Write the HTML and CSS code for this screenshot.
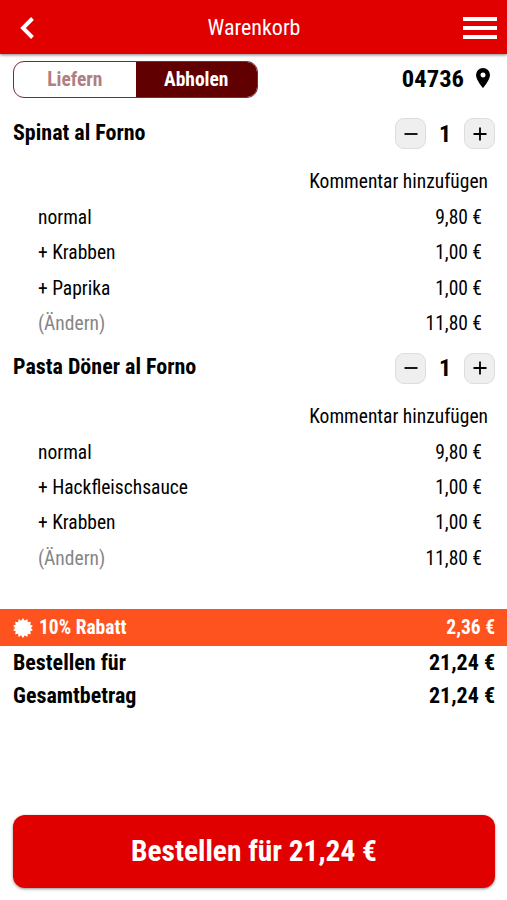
FILE: index.html
```html
<!DOCTYPE html>
<html lang="de">
<head>
  <meta charset="UTF-8" />
  <meta name="viewport" content="width=device-width, initial-scale=1.0"/>
  <title>Warenkorb</title>
  <link rel="stylesheet" href="styles.css">
</head>
<body>
  <header class="topbar">
    <svg class="back" viewBox="0 0 14 22"><path d="M12.5 1.5 3 11l9.5 9.5" /></svg>
    <h1 class="title">Warenkorb</h1>
    <div class="burger"><i></i><i></i><i></i></div>
  </header>

  <div class="options">
    <div class="switch">
      <div class="switch-item">Liefern</div>
      <div class="switch-item active">Abholen</div>
    </div>
    <div class="zip">
      <span>04736</span>
      <svg class="pin" viewBox="0 0 14 20"><path fill-rule="evenodd" d="M7 0a7 7 0 0 0-7 7c0 5 7 13 7 13s7-8 7-13a7 7 0 0 0-7-7zm0 4.5a2.5 2.5 0 1 1 0 5 2.5 2.5 0 0 1 0-5z" /></svg>
    </div>
  </div>

  <main class="cart">
    <section class="product">
      <div class="product-head">
        <h2 class="name">Spinat al Forno</h2>
        <div class="amount">
          <button class="step"><svg viewBox="0 0 14 14"><path d="M.5 7h13" /></svg></button>
          <span class="count">1</span>
          <button class="step"><svg viewBox="0 0 14 14"><path d="M.5 7h13M7 .5v13" /></svg></button>
        </div>
      </div>
      <div class="comment">Kommentar hinzufügen</div>
      <div class="row"><span>normal</span><span>9,80 €</span></div>
      <div class="row"><span>+ Krabben</span><span>1,00 €</span></div>
      <div class="row"><span>+ Paprika</span><span>1,00 €</span></div>
      <div class="row"><span class="change">(Ändern)</span><span>11,80 €</span></div>
    </section>

    <section class="product">
      <div class="product-head">
        <h2 class="name">Pasta Döner al Forno</h2>
        <div class="amount">
          <button class="step"><svg viewBox="0 0 14 14"><path d="M.5 7h13" /></svg></button>
          <span class="count">1</span>
          <button class="step"><svg viewBox="0 0 14 14"><path d="M.5 7h13M7 .5v13" /></svg></button>
        </div>
      </div>
      <div class="comment">Kommentar hinzufügen</div>
      <div class="row"><span>normal</span><span>9,80 €</span></div>
      <div class="row"><span>+ Hackfleischsauce</span><span>1,00 €</span></div>
      <div class="row"><span>+ Krabben</span><span>1,00 €</span></div>
      <div class="row"><span class="change">(Ändern)</span><span>11,80 €</span></div>
    </section>
  </main>

  <div class="discount">
    <svg class="badge" viewBox="-10 -10 20 20"><path d="M0-10 1.9-7.3 4.3-9 5-5.8 7.8-6.2 7.3-3.3 9.8-2.2 8 0 9.8 2.2 7.3 3.3 7.8 6.2 5 5.8 4.3 9 1.9 7.3 0 10-1.9 7.3-4.3 9-5 5.8-7.8 6.2-7.3 3.3-9.8 2.2-8 0-9.8-2.2-7.3-3.3-7.8-6.2-5-5.8-4.3-9-1.9-7.3z" /></svg>
    <span>10% Rabatt</span>
    <span class="price">2,36 €</span>
  </div>
  <div class="total"><span>Bestellen für</span><span>21,24 €</span></div>
  <div class="total"><span>Gesamtbetrag</span><span>21,24 €</span></div>

  <button class="order">Bestellen für 21,24 €</button>
</body>
</html>
```
FILE: styles.css
```css
* {
  box-sizing: border-box;
}

body {
  margin: 0;
  height: 900px;
  display: flex;
  flex-direction: column;
  overflow: hidden;
  background: #fff;
  color: #000;
  font-family: "Roboto Condensed", Roboto, sans-serif;
  font-stretch: 75%;
  font-size: 19.5px;
}

h1, h2 {
  margin: 0;
}

button {
  border: 0;
  padding: 0;
  font: inherit;
}

.topbar {
  flex: none;
  height: 54px;
  padding: 0 10px 0 20px;
  display: grid;
  grid-template-columns: 25px 1fr 34px;
  align-items: center;
  background: #e00000;
  color: #fff;
  box-shadow: 0 1px 3px rgba(0, 0, 0, 0.5);
}

.back {
  width: 14px;
  height: 22px;
  margin-top: 2px;
  fill: none;
  stroke: #fff;
  stroke-width: 3.9;
}

.title {
  font-size: 22px;
  font-weight: 400;
  text-align: center;
}

.burger {
  margin-top: 2px;
  display: flex;
  flex-direction: column;
  gap: 5px;
}

.burger i {
  height: 4px;
  background: #fff;
}

.options {
  flex: none;
  height: 50px;
  padding: 7px 17px 0 13px;
  display: flex;
  justify-content: space-between;
  align-items: flex-start;
}

.switch {
  width: 245px;
  height: 37px;
  display: flex;
  border: 1px solid #7c2c2c;
  border-radius: 11px;
  overflow: hidden;
  font-weight: 700;
}

.switch-item {
  flex: 1;
  display: flex;
  align-items: center;
  justify-content: center;
  color: #b07f7f;
}

.switch-item.active {
  background: #600000;
  color: #fff;
}

.zip {
  height: 36px;
  display: flex;
  align-items: center;
  gap: 12px;
  font-size: 24.6px;
  font-weight: 700;
  line-height: 30px;
}

.zip span {
  margin-top: -1px;
}

.pin {
  width: 14px;
  height: 20px;
  margin-top: -2px;
}

.cart {
  flex: none;
  height: 505px;
}

.product {
  height: 234.5px;
}

.product-head {
  height: 59px;
  padding: 0 12px 0 13px;
  display: flex;
  justify-content: space-between;
  align-items: center;
}

.name {
  font-size: 22px;
  font-weight: 700;
  line-height: 26px;
  padding-bottom: 2px;
}

.amount {
  display: flex;
  align-items: center;
}

.step {
  width: 31px;
  height: 31px;
  display: flex;
  align-items: center;
  justify-content: center;
  border: 1px solid #ddd;
  border-radius: 9px;
  background: #efefef;
}

.step svg {
  width: 14px;
  height: 14px;
  fill: none;
  stroke: #000;
  stroke-width: 1.8;
}

.count {
  width: 38px;
  text-align: center;
  font-size: 24px;
  font-weight: 700;
}

.comment {
  height: 37px;
  line-height: 38px;
  padding-right: 19px;
  text-align: right;
}

.row {
  height: 35.4px;
  line-height: 36px;
  padding: 0 25px 0 38px;
  display: flex;
  justify-content: space-between;
}

.change {
  color: #858585;
}

.discount {
  flex: none;
  height: 37px;
  line-height: 38px;
  padding: 0 12px 0 13px;
  display: flex;
  align-items: center;
  background: #ff531f;
  color: #fff;
  font-weight: 700;
}

.badge {
  width: 20px;
  height: 20px;
  margin-right: 6px;
  fill: #fff;
}

.price {
  margin-left: auto;
}

.total {
  flex: none;
  height: 33px;
  line-height: 33px;
  padding: 0 12px 0 13px;
  display: flex;
  justify-content: space-between;
  font-size: 22px;
  font-weight: 700;
}

.order {
  flex: none;
  height: 73px;
  margin: auto 12px 12px 13px;
  padding-bottom: 2px;
  border-radius: 12px;
  background: #e00000;
  color: #fff;
  font-size: 29.4px;
  font-weight: 700;
  box-shadow: 0 1px 3px rgba(0, 0, 0, 0.45);
}
```
